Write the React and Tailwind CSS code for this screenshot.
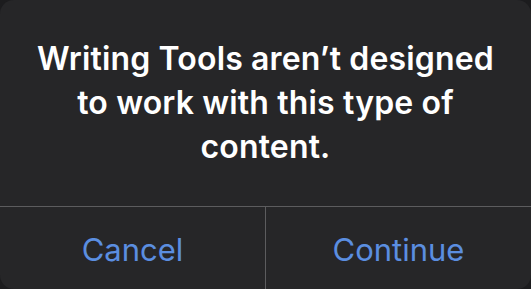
import React from "react";

const App = () => {
  return (
    <div className="w-[531px] h-[289px] bg-[#1c1c1e] overflow-hidden">
      <div
        className="w-full h-full bg-[#262628] rounded-[14px] flex flex-col"
        style={{ fontFamily: "Inter, 'Liberation Sans', sans-serif" }}
      >
        <div className="h-[206px] pt-[37px] px-4 text-center text-white text-[32px] font-semibold leading-[44px] tracking-[0.15px]">
          Writing Tools aren’t designed
          <br />
          to work with this type of
          <br />
          content.
        </div>
        <div className="flex flex-1 border-t border-[#5c5c5e]">
          <button className="flex-1 flex items-center justify-center text-[31px] text-[#5b8ee0] pt-[4px]">
            Cancel
          </button>
          <div className="w-px bg-[#5c5c5e]" />
          <button className="flex-1 flex items-center justify-center text-[31px] text-[#5b8ee0] pt-[4px]">
            Continue
          </button>
        </div>
      </div>
    </div>
  );
};

export default App;
